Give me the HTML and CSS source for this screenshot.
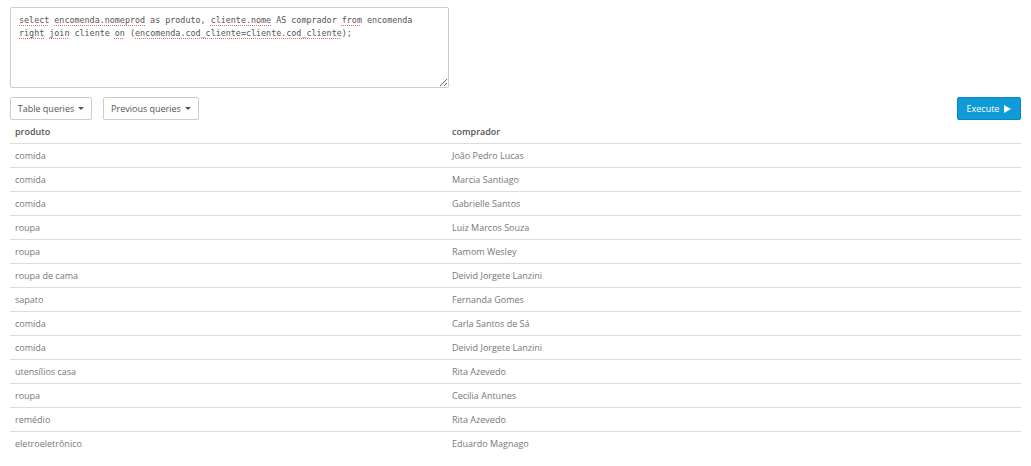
FILE: index.html
```html
<!DOCTYPE html>
<html>
<head>
<meta charset="utf-8">
<link rel="stylesheet" href="styles.css">
</head>
<body>
<div class="page">
  <div class="sql" contenteditable="true" spellcheck="false"><span class="sp">select</span> <span class="sp">encomenda.nomeprod</span> as produto, <span class="sp">cliente.nome</span> AS comprador <span class="sp">from</span> encomenda<br><span class="sp">right</span> <span class="sp">join</span> cliente <span class="sp">on</span> (<span class="sp">encomenda.cod_cliente=cliente.cod_cliente</span>);</div>
  <div class="toolbar">
    <div class="left">
      <button class="btn w1">Table queries <span class="caret"></span></button>
      <button class="btn w2">Previous queries <span class="caret"></span></button>
    </div>
    <button class="btn primary">Execute <span class="play"></span></button>
  </div>
  <table class="results">
    <thead>
      <tr><th class="c1">produto</th><th>comprador</th></tr>
    </thead>
    <tbody>
      <tr><td>comida</td><td>João Pedro Lucas</td></tr>
      <tr><td>comida</td><td>Marcia Santiago</td></tr>
      <tr><td>comida</td><td>Gabrielle Santos</td></tr>
      <tr><td>roupa</td><td>Luiz Marcos Souza</td></tr>
      <tr><td>roupa</td><td>Ramom Wesley</td></tr>
      <tr><td>roupa de cama</td><td>Deivid Jorgete Lanzini</td></tr>
      <tr><td>sapato</td><td>Fernanda Gomes</td></tr>
      <tr><td>comida</td><td>Carla Santos de Sá</td></tr>
      <tr><td>comida</td><td>Deivid Jorgete Lanzini</td></tr>
      <tr><td>utensílios casa</td><td>Rita Azevedo</td></tr>
      <tr><td>roupa</td><td>Cecilia Antunes</td></tr>
      <tr><td>remédio</td><td>Rita Azevedo</td></tr>
      <tr><td>eletroeletrônico</td><td>Eduardo Magnago</td></tr>
    </tbody>
  </table>
</div>
</body>
</html>
```

FILE: styles.css
```css
html, body {
  margin: 0;
  padding: 0;
  background: #fff;
}
.page {
  padding: 7px 10px 0 10px;
  font-family: "Open Sans", "Noto Sans", sans-serif;
  font-size: 9px;
  color: #777;
}
.sql {
  box-sizing: border-box;
  width: 439px;
  height: 81px;
  margin: 0;
  padding: 6px 8px;
  border: 1px solid #ccc;
  border-radius: 2px;
  font-family: "DejaVu Sans Mono", "Liberation Mono", monospace;
  font-size: 8.4px;
  line-height: 13px;
  color: #555;
  white-space: nowrap;
  resize: both;
  overflow: auto;
  outline: none;
}
.sp {
  text-decoration: underline dotted rgba(220, 60, 50, 0.75);
  text-decoration-thickness: 1px;
  text-underline-offset: 2px;
}
.toolbar {
  display: flex;
  justify-content: space-between;
  align-items: flex-start;
  margin-top: 9px;
}
.left {
  display: flex;
  gap: 11px;
}
.btn {
  box-sizing: border-box;
  height: 23px;
  padding: 0;
  border: 1px solid #ccc;
  border-radius: 2px;
  background: #fff;
  font-family: "Open Sans", "Noto Sans", sans-serif;
  font-size: 9px;
  color: #555;
  white-space: nowrap;
  display: inline-flex;
  align-items: center;
  justify-content: center;
  gap: 3px;
}
.w1 { width: 82px; }
.w2 { width: 96px; }
.caret {
  display: inline-block;
  width: 0;
  height: 0;
  border-left: 3px solid transparent;
  border-right: 3px solid transparent;
  border-top: 3px solid #555;
  margin-left: 1px;
}
.primary {
  width: 64px;
  background: #0f9ad8;
  border-color: #0a87c2;
  color: #fff;
}
.play {
  display: inline-block;
  width: 0;
  height: 0;
  border-top: 4.5px solid transparent;
  border-bottom: 4.5px solid transparent;
  border-left: 7px solid #fff;
  margin-left: 2px;
}
.results {
  width: 1011px;
  border-collapse: collapse;
}
.results th, .results td {
  text-align: left;
  padding: 0 5px;
  height: 24px;
  box-sizing: border-box;
  white-space: nowrap;
}
.results th {
  color: #555;
  font-weight: 600;
  height: 23px;
  border-bottom: 1px solid #ddd;
}
.results .c1 { width: 437px; }
.results tbody tr + tr td {
  border-top: 1px solid #ddd;
}
.results td {
  color: #777;
}
```
